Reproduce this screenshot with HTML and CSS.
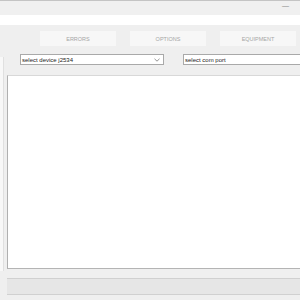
FILE: index.html
```html
<!doctype html>
<html lang="en">
<head>
    <meta charset="utf-8">
    <title>J2534 Tool</title>
    <link rel="stylesheet" href="styles.css">
</head>
<body>
<div id="window">
    <div id="titlebar">
        <span class="minimize">&#8212;</span>
    </div>
    <div id="menustrip"></div>
    <div id="tabs">
        <button class="tab">ERRORS</button>
        <button class="tab">OPTIONS</button>
        <button class="tab">EQUIPMENT</button>
    </div>
    <div id="workspace">
        <div id="side"></div>
        <div id="content">
            <div id="selectors">
                <div class="select device">
                    <span>select device j2534</span>
                    <svg class="chevron" width="6" height="4" viewBox="0 0 6 4"><path d="M0.5 0.8 L3 3.2 L5.5 0.8" fill="none" stroke="#777" stroke-width="0.8"/></svg>
                </div>
                <div class="select port">
                    <span>select com port</span>
                </div>
            </div>
            <div id="log"></div>
        </div>
    </div>
    <div id="statusbar"></div>
</div>
</body>
</html>
```

FILE: styles.css
```css
html, body {
    margin: 0;
    height: 100%;
}
body {
    background: #efefef;
    overflow: hidden;
    font-family: "Liberation Sans", Arial, sans-serif;
}
#window {
    width: 300px;
    height: 299px;
    overflow: hidden;
    border-top: 1px solid #c4c4c4;
    border-bottom: 1px solid #b8b8b8;
    display: flex;
    flex-direction: column;
}
#titlebar {
    height: 14px;
    background: #f0f0f0;
    position: relative;
}
.minimize {
    position: absolute;
    left: 282px;
    top: 1px;
    font-size: 7px;
    color: #888;
}
#menustrip {
    height: 10px;
    background: #ffffff;
}
#tabs {
    display: flex;
    gap: 14px;
    padding: 6px 0 8px 40px;
    overflow: hidden;
}
.tab {
    flex: none;
    width: 76px;
    height: 15px;
    border: none;
    background: #f7f7f7;
    color: #a6a6a6;
    font-family: "Liberation Sans", Arial, sans-serif;
    font-size: 5.5px;
    padding: 0;
}
#workspace {
    flex: 1;
    display: flex;
}
#side {
    width: 3px;
    margin-top: 3px;
    background: #f8f8f8;
    border-right: 1px solid #e0e0e0;
}
#content {
    flex: 1;
    min-width: 0;
    margin-left: 3px;
    display: flex;
    flex-direction: column;
}
#selectors {
    display: flex;
    gap: 19px;
    padding-left: 13px;
    height: 11px;
    margin-bottom: 10px;
    overflow: hidden;
}
.select {
    flex: none;
    box-sizing: border-box;
    height: 11px;
    background: #fff;
    border: 1px solid #a9a9a9;
    font-size: 6px;
    color: #222;
    display: flex;
    align-items: center;
    padding-left: 1px;
}
.device {
    width: 144px;
    position: relative;
}
.chevron {
    position: absolute;
    right: 3px;
    top: 3px;
}
.port {
    width: 140px;
}
#log {
    height: 192px;
    background: #fff;
    border-left: 1px solid #b0b0b0;
    border-top: 1px solid #d8d8d8;
    border-bottom: 1px solid #b4b4b4;
}
#statusbar {
    margin: 7px 0 5px 7px;
    height: 15px;
    background: #e6e6e6;
    border-top: 1px solid #d0d0d0;
    border-bottom: 1px solid #d0d0d0;
}
```
